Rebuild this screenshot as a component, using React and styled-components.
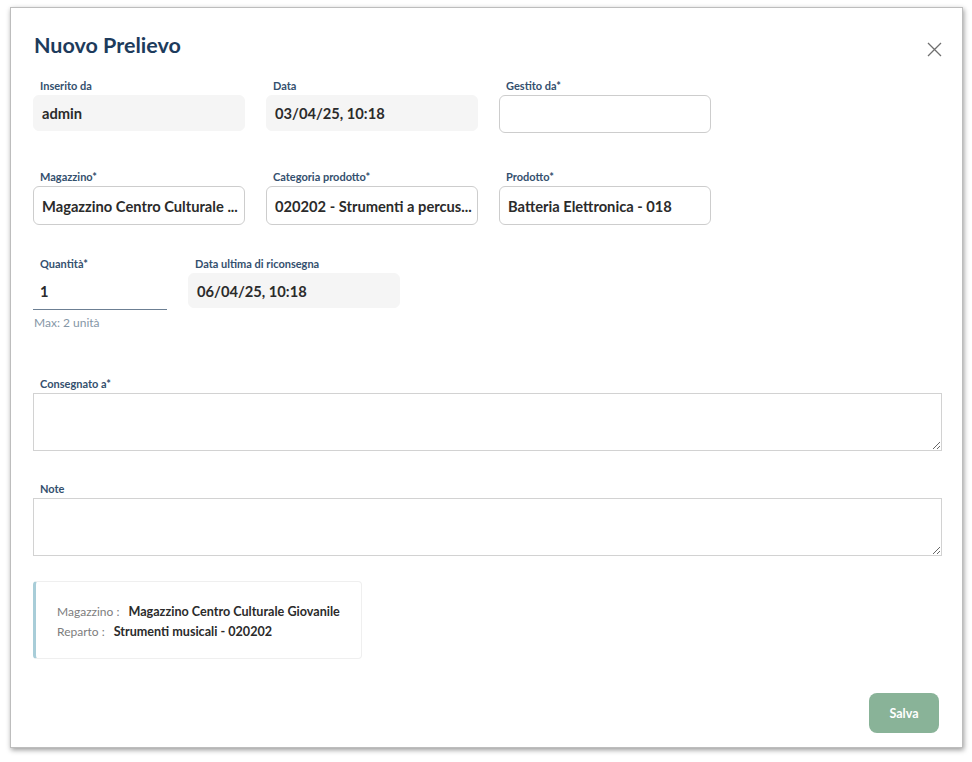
import React from 'react';
import styled, { createGlobalStyle } from 'styled-components';

const GlobalStyle = createGlobalStyle`
  body {
    margin: 0;
    background: #ffffff;
    font-family: Lato, "Noto Sans", sans-serif;
  }
`;

const Page = styled.div`
  padding: 7px 0 0 10px;
  width: 972px;
  height: 762px;
  box-sizing: border-box;
`;

const Dialog = styled.div`
  width: 953px;
  height: 741px;
  box-sizing: border-box;
  background: #fff;
  border: 1px solid #bdbdbd;
  box-shadow: 1px 2px 5px rgba(0, 0, 0, 0.4);
  padding: 24px 20px 14px 22px;
  display: flex;
  flex-direction: column;
`;

const Header = styled.div`
  display: flex;
  justify-content: space-between;
  align-items: center;
  height: 26px;
`;

const Title = styled.h2`
  margin: 0 0 0 1px;
  font-size: 21.5px;
  line-height: 26px;
  font-weight: 700;
  color: #1d3b5c;
`;

const CloseButton = styled.button`
  border: none;
  background: none;
  padding: 0;
  margin-top: 8px;
  width: 15px;
  height: 15px;
  cursor: pointer;
  display: flex;
`;

const Row = styled.div`
  display: flex;
  gap: 21px;
  margin-top: ${(p) => p.$top}px;
`;

const Field = styled.div`
  display: flex;
  flex-direction: column;
  width: ${(p) => p.$width || 212}px;
`;

const Label = styled.label`
  font-size: 11px;
  line-height: 14px;
  font-weight: 700;
  color: #34506e;
  padding-left: 7px;
  margin-bottom: 2px;
`;

const Box = styled.div`
  height: ${(p) => p.$height}px;
  box-sizing: border-box;
  border-radius: 6px;
  background: ${(p) => (p.$filled ? '#f5f5f5' : '#fff')};
  border: 1px solid ${(p) => (p.$filled ? '#f5f5f5' : '#cdcdcd')};
  padding: 0 8px;
  display: flex;
  align-items: center;
  font-size: 14.7px;
  font-weight: 700;
  color: #2b2b2b;
  white-space: nowrap;
  overflow: hidden;
  text-overflow: ellipsis;
`;

const UnderlineInput = styled.div`
  height: 37px;
  box-sizing: border-box;
  border-bottom: 1px solid #6c7f93;
  padding: 0 7px;
  display: flex;
  align-items: center;
  font-size: 14.7px;
  font-weight: 700;
  color: #2b2b2b;
`;

const Hint = styled.div`
  font-size: 12px;
  line-height: 14px;
  color: #8596a6;
  margin-top: 6px;
  padding-left: 1px;
`;

const Block = styled.div`
  display: flex;
  flex-direction: column;
  margin-top: ${(p) => p.$top}px;
`;

const TextArea = styled.textarea`
  height: 58px;
  box-sizing: border-box;
  border: 1px solid #d2d2d2;
  border-radius: 0;
  margin: 0;
  resize: vertical;
  font-family: inherit;
  font-size: 14px;
  outline: none;
`;

const InfoBox = styled.div`
  margin-top: 25px;
  width: 329px;
  height: 78px;
  box-sizing: border-box;
  border: 1px solid #efefef;
  border-left: 3px solid #a8cdd8;
  border-radius: 4px;
  padding: 4px 0 0 21px;
  display: flex;
  flex-direction: column;
  justify-content: center;
  gap: 4px;
`;

const InfoLine = styled.div`
  font-size: 12.6px;
  line-height: 16px;
  color: #2b2b2b;
  display: flex;
  gap: 9px;
`;

const InfoKey = styled.span`
  color: #7d7d7d;
  font-weight: 400;
  font-size: 12px;
`;

const InfoValue = styled.span`
  font-weight: 700;
`;

const Footer = styled.div`
  margin-top: auto;
  display: flex;
  justify-content: flex-end;
  padding-right: 3px;
`;

const SaveButton = styled.button`
  width: 70px;
  height: 40px;
  border: none;
  border-radius: 8px;
  background: #89b398;
  color: #fff;
  font-family: inherit;
  font-size: 12.5px;
  font-weight: 700;
`;

export default function App() {
  return (
    <Page>
      <GlobalStyle />
      <Dialog>
        <Header>
          <Title>Nuovo Prelievo</Title>
          <CloseButton aria-label="Chiudi">
            <svg width="15" height="15" viewBox="0 0 15 15">
              <path d="M1 1 L14 14 M14 1 L1 14" stroke="#6f6f6f" strokeWidth="1.3" fill="none" />
            </svg>
          </CloseButton>
        </Header>

        <Row $top={21}>
          <Field>
            <Label>Inserito da</Label>
            <Box $filled $height={36}>admin</Box>
          </Field>
          <Field>
            <Label>Data</Label>
            <Box $filled $height={36}>03/04/25, 10:18</Box>
          </Field>
          <Field>
            <Label>Gestito da*</Label>
            <Box $height={38} />
          </Field>
        </Row>

        <Row $top={37}>
          <Field>
            <Label>Magazzino*</Label>
            <Box $height={39}>Magazzino Centro Culturale ...</Box>
          </Field>
          <Field>
            <Label>Categoria prodotto*</Label>
            <Box $height={39}>020202 - Strumenti a percus...</Box>
          </Field>
          <Field>
            <Label>Prodotto*</Label>
            <Box $height={39}>Batteria Elettronica - 018</Box>
          </Field>
        </Row>

        <Row $top={32}>
          <Field $width={134}>
            <Label>Quantità*</Label>
            <UnderlineInput>1</UnderlineInput>
            <Hint>Max: 2 unità</Hint>
          </Field>
          <Field>
            <Label>Data ultima di riconsegna</Label>
            <Box $filled $height={35}>06/04/25, 10:18</Box>
          </Field>
        </Row>

        <Block $top={47}>
          <Label>Consegnato a*</Label>
          <TextArea />
        </Block>

        <Block $top={31}>
          <Label>Note</Label>
          <TextArea />
        </Block>

        <InfoBox>
          <InfoLine>
            <InfoKey>Magazzino :</InfoKey>
            <InfoValue>Magazzino Centro Culturale Giovanile</InfoValue>
          </InfoLine>
          <InfoLine>
            <InfoKey>Reparto :</InfoKey>
            <InfoValue>Strumenti musicali - 020202</InfoValue>
          </InfoLine>
        </InfoBox>

        <Footer>
          <SaveButton>Salva</SaveButton>
        </Footer>
      </Dialog>
    </Page>
  );
}
